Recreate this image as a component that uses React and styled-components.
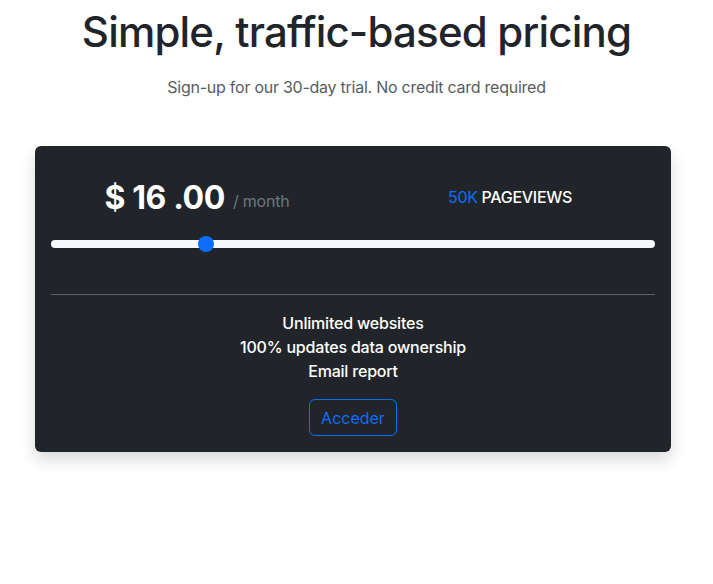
import React, { useState } from "react";
import styled, { createGlobalStyle } from "styled-components";

const Global = createGlobalStyle`
  * { box-sizing: border-box; }
  body { margin: 0; background: #fff; font-family: Inter, "Noto Sans", sans-serif; color: #212529; }
`;

const Page = styled.div`
  width: 713px;
  display: flex;
  flex-direction: column;
  align-items: center;
  padding: 4px 0 60px;
`;

const Title = styled.h1`
  margin: 0;
  font-size: 42px;
  line-height: 56px;
  font-weight: 500;
  letter-spacing: -0.8px;
  color: #212529;
`;

const Subtitle = styled.p`
  margin: 15px 0 0;
  font-size: 16px;
  line-height: 24px;
  letter-spacing: -0.25px;
  color: #595c5f;
`;

const Card = styled.div`
  margin: 47px 42px 0 35px;
  align-self: stretch;
  background: #212529;
  border-radius: 6px;
  box-shadow: 0 8px 16px rgba(0, 0, 0, 0.15);
  padding: 16px;
  display: flex;
  flex-direction: column;
`;

const TopRow = styled.div`
  display: grid;
  grid-template-columns: 1fr 1fr;
  align-items: center;
  height: 70px;
`;

const PriceBox = styled.div`
  display: flex;
  align-items: baseline;
  justify-content: center;
  gap: 8px;
  padding-right: 10px;
`;

const Price = styled.span`
  font-size: 32px;
  font-weight: 700;
  color: #fff;
  letter-spacing: -0.4px;
`;

const Per = styled.span`
  font-size: 16px;
  color: #6c757d;
  letter-spacing: -0.2px;
  position: relative;
  top: -2px;
`;

const Views = styled.div`
  text-align: center;
  font-size: 16px;
  font-weight: 500;
  color: #fff;
  padding-left: 12px;
  letter-spacing: -0.3px;
`;

const Blue = styled.span`
  color: #0d6efd;
  font-weight: 400;
`;

const SliderWrap = styled.div`
  position: relative;
  height: 20px;
  margin-top: 2px;
`;

const Track = styled.div`
  position: absolute;
  left: 0;
  right: 0;
  top: 6px;
  height: 8px;
  border-radius: 4px;
  background: #f8f9fa;
`;

const Thumb = styled.div`
  position: absolute;
  top: 2px;
  width: 16px;
  height: 16px;
  margin-left: -8px;
  border-radius: 50%;
  background: #0d6efd;
`;

const Divider = styled.hr`
  margin: 40px 0 0;
  border: 0;
  border-top: 1px solid #5c5f63;
`;

const Features = styled.ul`
  list-style: none;
  margin: 16px 0 0;
  padding: 0;
  text-align: center;
  color: #fff;
  font-size: 16px;
  line-height: 24px;
  font-weight: 500;
  letter-spacing: -0.2px;
`;

const Button = styled.button`
  align-self: center;
  margin-top: 16px;
  width: 88px;
  height: 37px;
  border: 1px solid #0d6efd;
  border-radius: 6px;
  background: transparent;
  color: #0d6efd;
  font-family: inherit;
  font-size: 16px;
  cursor: pointer;
`;

export default function App() {
  const [value] = useState(25.7);
  return (
    <>
      <Global />
      <Page>
        <Title>Simple, traffic-based pricing</Title>
        <Subtitle>Sign-up for our 30-day trial. No credit card required</Subtitle>
        <Card>
          <TopRow>
            <PriceBox>
              <Price>$ 16 .00</Price>
              <Per>/ month</Per>
            </PriceBox>
            <Views>
              <Blue>50K</Blue> PAGEVIEWS
            </Views>
          </TopRow>
          <SliderWrap>
            <Track />
            <Thumb style={{ left: `${value}%` }} />
          </SliderWrap>
          <Divider />
          <Features>
            <li>Unlimited websites</li>
            <li>100% updates data ownership</li>
            <li>Email report</li>
          </Features>
          <Button>Acceder</Button>
        </Card>
      </Page>
    </>
  );
}
